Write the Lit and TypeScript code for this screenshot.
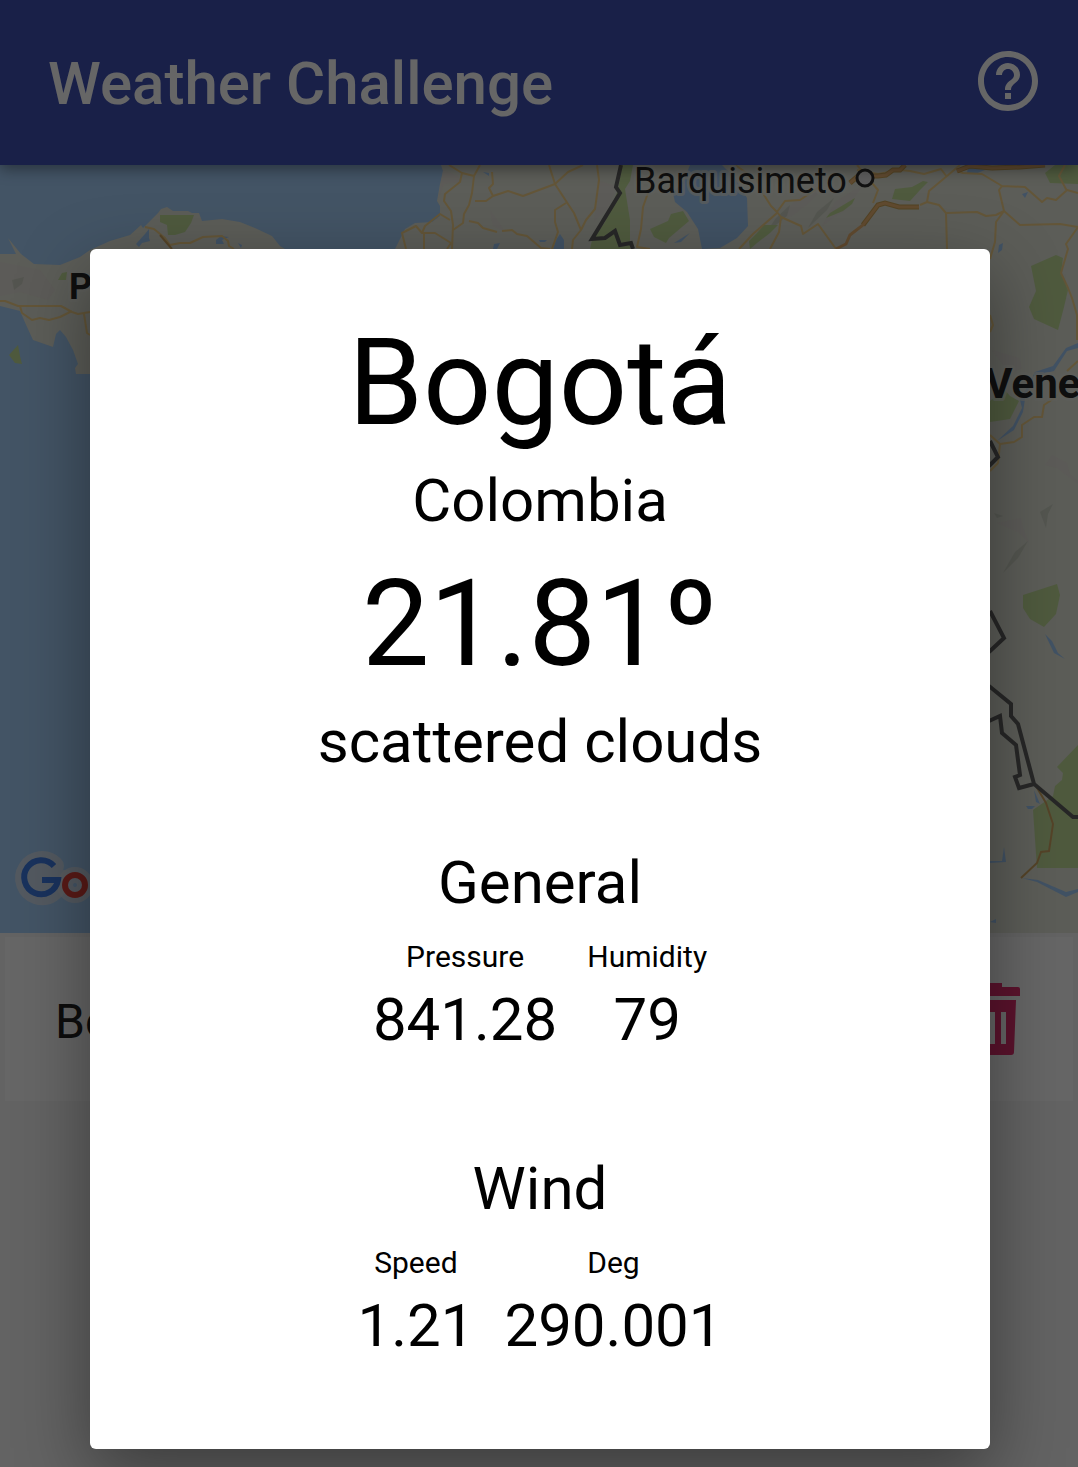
import { LitElement, html, css, svg } from "lit";
import { customElement, property } from "lit/decorators.js";

const PARKS = [
  "M160 215H194L191 223L185 232L175 235H168L167 225L160 222Z",
  "M58 280L62 273L67 272L66 280Z",
  "M9 355L18 345L20 356L22 364L15 363Z",
  "M622 165H633L630 181L625 189L630 220V249H590L592 240L605 222L618 190Z",
  "M650 229L668 221L671 214L683 211L689 221L669 238L666 243L654 237Z",
  "M892 199L895 189L912 187L923 181L928 182L920 190L910 201Z",
  "M826 218L830 213L845 204L855 198L852 204L843 211Z",
  "M749 241L757 233L764 225H778L770 233L757 243L750 249Z",
  "M1045 173L1055 165H1078V184L1050 183Z",
  "M1031 266L1056 255L1063 258L1061 273L1068 290L1064 307L1058 330L1034 319L1029 307L1036 291Z",
  "M990 401L1004 389L1010 396L1019 401L1010 419L990 422Z",
  "M1023 595L1057 584L1060 595L1056 614L1044 627L1030 619L1023 608Z",
  "M1078 745L1057 767L1063 773L1062 780L1055 786L1053 796L1033 810L1037 868H1078Z",
];

const RELIEF = [
  "M0 262L40 270L55 290L48 300L20 292L0 296Z",
  "M443 170L458 176L462 182L444 184L438 200Z",
  "M490 210L500 224L504 231L493 226Z",
  "M600 181L616 186L608 208L594 222Z",
  "M800 196L818 182L826 186L810 202L792 216L776 220Z",
  "M835 202L854 190L862 187L846 209L822 226Z",
  "M992 350L1019 358L1022 368L1010 374Z",
  "M1045 465L1052 455L1067 463L1070 474L1078 481V484L1057 468Z",
  "M997 523L1021 518L1023 528L1029 543L1018 532Z",
];

const RELIEF_DARK = [
  "M12 280L24 277L22 284L14 290Z",
  "M776 218L790 205L787 216L765 234Z",
  "M817 212L834 198L827 210L808 228Z",
  "M1015 552L1028 541L1018 558L1003 573Z",
  "M1040 512L1053 504L1048 514L1046 528Z",
  "M994 513L1003 516L997 518Z",
];

const WATERS = [
  "M690 165H722L735 178L747 198L748 226L737 238L720 248L702 249L698 229L687 212L675 202L673 193L684 180Z",
  "M145 234L149 229V238L150 241L142 243L139 247L136 244Z",
  "M216 240L221 236L229 237L222 240L224 244H216Z",
  "M238 243L242 245L241 248Z",
  "M483 172L489 173V176Z",
  "M539 240H547L545 242H540Z",
  "M553 249L556 240L560 234L564 240V249Z",
  "M494 244L500 243L497 249H493Z",
  "M968 168L984 166L985 170L975 174L967 173Z",
  "M1022 194L1028 192L1025 198Z",
  "M999 245L1003 243L1002 250L998 253Z",
  "M674 243L690 233L681 242Z",
  "M1045 634L1052 641L1058 653L1065 659L1054 653Z",
  "M1034 790L1040 804L1036 802Z",
  "M1026 806H1035L1032 809H1028Z",
  "M990 861L1002 861L1004 847L1006 862L990 863Z",
  "M1022 878L1038 880L1066 892L1078 889V892L1066 897L1037 882Z",
  "M990 922L996 919V923Z",
];

const ROADS = [
  "M145 227L154 229L165 238L170 245L180 243L190 243L203 237L222 236L228 241L229 246L234 249",
  "M0 301H5L18 306H29L37 306H61L72 312L78 314L90 312M20 306L22 313L32 320L40 318L49 320L60 317L72 311M84 314L87 333L90 335",
  "M449 165L462 173L460 182L445 194L444 201L451 211L453 225L452 249M462 173L474 176L480 165M474 176L472 193L469 205L464 214L463 223L453 230M492 172L493 184L489 188L493 196L486 201H475M493 196L508 191L523 196L555 184L568 172L583 165",
  "M406 249L402 233L416 226L422 233H435L451 243L447 249M424 233V249M422 233L425 226L440 214L450 220",
  "M549 165L555 184L568 204L574 213L581 230L573 240L572 249M566 203L555 210V222L558 232L552 249M581 230L586 220L595 209L599 180L597 165",
  "M469 221L478 223L483 228L497 232M502 231L512 230L517 234L527 236L534 242L541 248L550 249",
  "M649 190L643 207L641 229L637 247L650 249M735 165L757 180L764 195L771 206L777 212L781 217L801 226L803 234L818 224L836 249M777 212L785 201L800 200L819 187M777 213L753 234L739 249M781 217L779 232L770 249",
  "M857 165L867 177L878 190L873 203M920 205L927 202L929 191L947 176L960 165M857 170L878 174L900 170L910 171L924 174L941 169L947 177M927 202L939 205L946 213L977 212L986 216L996 215L1004 211L1020 225L1060 224L1078 227M946 213L947 249M1004 211L999 190L1002 186L982 174L963 173L957 171M1002 186L1025 187L1042 202L1047 198L1056 200L1067 190L1078 193M1065 165L1059 176L1067 191M1004 211L996 222L995 242L990 259M1078 227L1066 244L1068 249L1061 273L1068 288L1072 298L1077 315V340M1067 371L1078 361M990 435L1000 444L1014 442L1022 437V425L1034 417H1042L1044 405L1056 397L1065 382M1000 444L998 463L990 471M990 315L993 325L990 332",
];

const BORDERS = [
  "M621 165L616 187L620 193L592 239L605 238L615 231L620 245L631 243L633 249",
  "M990 441L998 457L989 466",
  "M990 611L1004 638L989 652",
  "M989 686L1011 704V716L1018 724L1034 784L1073 817H1078M989 721L1000 716L1002 733L1016 745L1020 775L1015 777L1019 788L1034 784",
];

@customElement("world-map")
export class WorldMap extends LitElement {
  static styles = css`
    :host { display: block; }
    .map { display: block; width: 100%; height: auto; background: #a7d1fc; }
    .land { fill: #e5e8db; }
    .relief { fill: #e9dfdb; opacity: 0.55; }
    .relief-dark { fill: #c4ccbd; opacity: 0.6; }
    .park { fill: #c5e19c; }
    .water { fill: #a3ccfa; }
    .road { fill: none; stroke: #f7d58c; stroke-width: 2; stroke-linejoin: round; }
    .road-edge { fill: none; stroke: #cfa75a; stroke-width: 5; }
    .highway { fill: none; stroke: #efb877; stroke-width: 3; }
    .trail { fill: none; stroke: #d3a964; stroke-width: 2; }
    .border { fill: none; stroke: #626262; stroke-width: 4; }
    .label {
      font-family: Roboto, sans-serif;
      fill: #262626;
      stroke: #ecefe5;
      stroke-opacity: 0.7;
      stroke-width: 6px;
      stroke-linejoin: round;
      paint-order: stroke;
    }
    .city { font-size: 36px; }
    .country { font-size: 36px; font-weight: 700; }
    .nation { font-size: 42px; font-weight: 700; }
    .pin { fill: #e5e5e5; stroke: #2d2d2d; stroke-width: 3; }
    .halo { fill: none; stroke: #dfe6ec; stroke-opacity: 0.7; stroke-linecap: round; }
    .g { fill: none; stroke: #3f7ee8; stroke-width: 6; }
    .o { fill: none; stroke: #e2423a; stroke-width: 6; }
  `;

  render() {
    const shapes = (list: string[], name: string) =>
      list.map((d) => svg`<path class=${name} d=${d}></path>`);
    return html`
      <svg class="map" viewBox="0 165 1078 768" role="img" aria-label="Map">
        <path class="land" d="M0 254L16 254L8 238L21 254L34 264L60 265L80 257L90 250L110 241L130 235L141 225L143 228L158 213L161 209L167 207L173 211L188 211L192 213L199 213L202 221L222 219L240 222L255 228L272 236L280 246L290 252V374H76L75 368L78 364L73 350L66 337L60 330L56 334L53 347L33 340L27 327L20 311L0 306Z"></path>
        <path class="land" d="M441 165L443 171L440 184L437 201L440 206V216L432 222L415 223L405 229L395 249V933H1078V165Z"></path>
        ${shapes(RELIEF, "relief")}
        ${shapes(RELIEF_DARK, "relief-dark")}
        ${shapes(PARKS, "park")}
        ${shapes(WATERS, "water")}
        <path class="water" d="M997 441L1013 426L1022 408L1020 400L1035 372L1053 366L1066 348L1078 343V348L1067 351L1054 371L1034 376L1025 399L1023 412L1014 430Z"></path>
        ${shapes(ROADS, "road")}
        <path class="trail" d="M160 235L172 249M1036 786L1046 803L1053 824L1051 838L1049 851L1041 852L1037 863L1021 878"></path>
        <path class="road-edge" d="M850 183L858 176H878L886 175L893 170H900L905 165M863 225L878 205L885 203L899 207L919 207M957 171L970 166L992 168L1020 167L1045 165"></path>
        <path class="highway" d="M850 183L858 176H878L886 175L893 170H900L905 165M836 249L846 244L850 235L863 225L878 205L885 203L899 207L919 207M957 171L970 166L992 168L1020 167L1045 165"></path>
        ${shapes(BORDERS, "border")}
        <text class="label city" x="634" y="193">Barquisimeto</text>
        <circle class="pin" cx="865" cy="178" r="8"></circle>
        <text class="label country" x="69" y="299">Panama</text>
        <text class="label nation" x="985" y="398">Venezuela</text>
        <path class="halo" stroke-width="20" d="M54 866A17 17 0 1 0 59 880H43"></path>
        <circle class="halo" stroke-width="16" cx="75" cy="885" r="10"></circle>
        <path class="g" d="M54 866A17 17 0 1 0 58 880H42"></path>
        <circle class="o" cx="75" cy="885" r="10"></circle>
      </svg>
    `;
  }
}

@customElement("weather-reading")
export class WeatherReading extends LitElement {
  @property() label = "";
  @property() value = "";

  static styles = css`
    :host { display: block; }
    .reading { display: flex; flex-direction: column; align-items: center; gap: 5px; margin: 0; }
    .label { font-size: 30px; line-height: 40px; }
    .value { margin: 0; font-size: 60px; line-height: 76px; }
  `;

  render() {
    return html`
      <dl class="reading">
        <dt class="label">${this.label}</dt>
        <dd class="value">${this.value}</dd>
      </dl>
    `;
  }
}

@customElement("app-root")
export class AppRoot extends LitElement {
  static styles = css`
    :host {
      display: block;
      position: relative;
      min-height: 100vh;
      overflow: hidden;
      background: #f8f8f8;
      font-family: Roboto, sans-serif;
      color: #000;
    }
    .bar {
      position: relative;
      display: flex;
      align-items: flex-start;
      justify-content: space-between;
      padding: 45px 34px 42px 48px;
      background: #3f51b5;
      box-shadow: 0 4px 14px rgba(0, 0, 0, 0.4);
    }
    .title { margin: 0; font-size: 60px; line-height: 78px; font-weight: 500; color: #fff; }
    .icon-button { display: flex; padding: 0; border: 0; background: none; }
    .help { width: 72px; height: 72px; fill: #fff; }
    .places { margin: 0; padding: 4px 5px; list-style: none; }
    .place {
      display: flex;
      align-items: flex-start;
      justify-content: space-between;
      padding: 46px 53px 40px 50px;
      background: #fefefe;
      font-size: 48px;
      line-height: 78px;
      color: #212121;
    }
    .trash { width: 72px; height: 72px; fill: #e53070; }
    .scrim {
      position: absolute;
      inset: 0;
      padding: 249px 88px 18px 90px;
      background: rgba(0, 0, 0, 0.6);
    }
    .dialog {
      display: flex;
      flex-direction: column;
      align-items: center;
      padding: 54px 24px 85px;
      border-radius: 6px;
      background: #fff;
      box-shadow: 0 24px 72px rgba(0, 0, 0, 0.4);
      text-align: center;
    }
    .display { margin: 0; font-size: 120px; line-height: 160px; font-weight: 400; }
    .text { margin: 0; font-size: 60px; line-height: 76px; font-weight: 400; }
    .temperature { margin-top: 5px; }
    .group { display: flex; flex-direction: column; align-items: center; gap: 16px; }
    .general { margin-top: 65px; }
    .wind { margin-top: 93px; }
    .readings { display: flex; gap: 30px; }
  `;

  render() {
    return html`
      <header class="bar">
        <h1 class="title">Weather Challenge</h1>
        <button class="icon-button" aria-label="Help">
          <svg class="help" viewBox="0 0 24 24" aria-hidden="true">
            <path d="M11 18h2v-2h-2v2zm1-16C6.480 2 2 6.480 2 12s4.480 10 10 10 10-4.480 10-10S17.520 2 12 2zm0 18c-4.410 0-8-3.590-8-8s3.590-8 8-8 8 3.590 8 8-3.590 8-8 8zm0-14c-2.210 0-4 1.790-4 4h2c0-1.100.9-2 2-2s2 .9 2 2c0 2-3 1.750-3 5h2c0-2.250 3-2.500 3-5 0-2.210-1.790-4-4-4z"></path>
          </svg>
        </button>
      </header>
      <main>
        <world-map></world-map>
        <ul class="places">
          <li class="place">
            <span>Bogotá</span>
            <button class="icon-button" aria-label="Delete">
              <svg class="trash" viewBox="0 0 72 72" aria-hidden="true">
                <path d="M18 0H54V4H70Q72 4 72 6V13H0V6Q0 4 2 4H18Z"></path>
                <path fill-rule="evenodd" d="M4 17H68L66 69Q66 72 63 72H9Q6 72 6 69ZM14 29V61H19V29ZM25 29V61H30V29ZM42 29V61H47V29ZM53 29V61H58V29Z"></path>
              </svg>
            </button>
          </li>
        </ul>
      </main>
      <div class="scrim">
        <section class="dialog" role="dialog" aria-modal="true" aria-labelledby="city">
          <h2 class="display" id="city">Bogotá</h2>
          <p class="text">Colombia</p>
          <p class="display temperature">21.81º</p>
          <p class="text">scattered clouds</p>
          <div class="group general">
            <h3 class="text">General</h3>
            <div class="readings">
              <weather-reading label="Pressure" value="841.28"></weather-reading>
              <weather-reading label="Humidity" value="79"></weather-reading>
            </div>
          </div>
          <div class="group wind">
            <h3 class="text">Wind</h3>
            <div class="readings">
              <weather-reading label="Speed" value="1.21"></weather-reading>
              <weather-reading label="Deg" value="290.001"></weather-reading>
            </div>
          </div>
        </section>
      </div>
    `;
  }
}
